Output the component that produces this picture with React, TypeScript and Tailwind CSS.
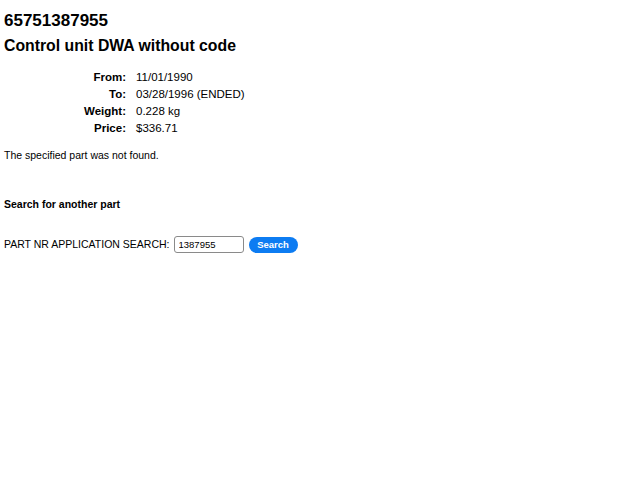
const DETAILS = [
  { label: 'From:', value: '11/01/1990' },
  { label: 'To:', value: '03/28/1996 (ENDED)' },
  { label: 'Weight:', value: '0.228 kg' },
  { label: 'Price:', value: '$336.71' },
]

export default function App() {
  return (
    <div className="min-h-screen bg-white text-black px-[4px] pt-[11px] font-['Liberation_Sans',Arial,sans-serif]">
      <h1 className="text-[17px] leading-[20px] font-bold">65751387955</h1>
      <h2 className="mt-[5px] text-[15.8px] leading-[20px] font-bold">Control unit DWA without code</h2>

      {/* part details */}
      <div className="mt-[13px] flex flex-col text-[11.5px] leading-[17px]">
        {DETAILS.map(row => (
          <div key={row.label} className="flex">
            <span className="w-[122px] text-right font-bold">{row.label}</span>
            <span className="pl-[10px]">{row.value}</span>
          </div>
        ))}
      </div>

      <p className="mt-[12px] text-[10.5px] leading-[13px]">The specified part was not found.</p>

      <p className="mt-[36px] text-[10.5px] leading-[13px] font-bold">Search for another part</p>

      <form className="mt-[25px] flex items-center text-[10.5px]" onSubmit={e => e.preventDefault()}>
        <label htmlFor="partnr">PART NR APPLICATION SEARCH:</label>
        <input
          id="partnr"
          type="text"
          defaultValue="1387955"
          className="ml-[4px] w-[70px] h-[17px] border border-[#8a8a8a] rounded-[3px] px-[4px] text-[9.5px] outline-none"
        />
        <button
          type="submit"
          className="ml-[5px] w-[49px] h-[16px] rounded-full bg-[#0d7cf2] text-white text-[9.5px] font-bold leading-none"
        >
          Search
        </button>
      </form>
    </div>
  )
}
